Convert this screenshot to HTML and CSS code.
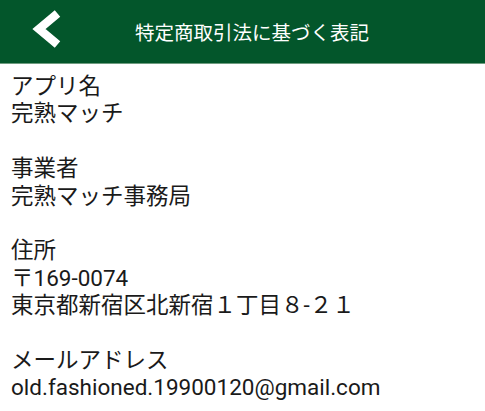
FILE: index.html
```html
<!DOCTYPE html>
<html lang="ja">
<head>
<meta charset="utf-8">
<title>特定商取引法に基づく表記</title>
<link rel="stylesheet" href="styles.css">
</head>
<body>
<header class="appbar">
  <a class="back" href="#" aria-label="戻る">
    <svg width="36" height="48" viewBox="0 0 36 48"><path d="M29.5 8.5 L11 24 L29.5 39.5" fill="none" stroke="#fff" stroke-width="8.5" stroke-linecap="butt" stroke-linejoin="miter"/></svg>
  </a>
  <h1 class="title">特定商取引法に基づく表記</h1>
</header>
<main class="content">
  <section class="item">
    <p>アプリ名</p>
    <p>完熟マッチ</p>
  </section>
  <section class="item">
    <p>事業者</p>
    <p>完熟マッチ事務局</p>
  </section>
  <section class="item">
    <p>住所</p>
    <p>〒169-0074</p>
    <p>東京都新宿区北新宿１丁目８-２１</p>
  </section>
  <section class="item">
    <p>メールアドレス</p>
    <p>old.fashioned.19900120@gmail.com</p>
  </section>
</main>
</body>
</html>
```
FILE: styles.css
```css
html, body {
  margin: 0;
  padding: 0;
  background: #fff;
}
body {
  font-family: "Roboto", "Noto Sans CJK JP", sans-serif;
  color: #1a1a1a;
}
.appbar {
  height: 63px;
  background: #03562b;
  border-bottom: 1px solid #6f9c80;
  display: flex;
  align-items: center;
}
.back {
  display: flex;
  align-self: flex-start;
  width: 36px;
  height: 48px;
  margin-left: 28px;
  margin-top: 5px;
}
.title {
  margin: 0 0 0 71px;
  font-size: 19.5px;
  font-weight: normal;
  color: #fff;
  letter-spacing: 0;
}
.content {
  padding: 9px 11px;
  font-size: 22.5px;
  line-height: 27.4px;
}
.item {
  margin-bottom: 27.4px;
}
.item p {
  margin: 0;
}
```
